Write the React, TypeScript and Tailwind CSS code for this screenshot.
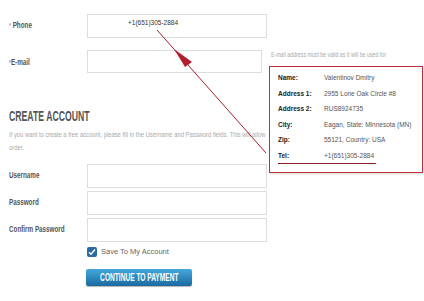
import React from 'react'

const sans = "font-['Liberation_Sans',Arial,sans-serif]"

const details = [
  { label: 'Name:', value: 'Valentinov Dmitry' },
  { label: 'Address 1:', value: '2955 Lone Oak Circle #8' },
  { label: 'Address 2:', value: 'RUS8924735' },
  { label: 'City:', value: 'Eagan, State: Minnesota (MN)' },
  { label: 'Zip:', value: '55121, Country: USA' },
]

// no condensed face installed, so squeeze the regular one
function Narrow({ children, className = '' }: { children: React.ReactNode; className?: string }) {
  return <span className={`inline-block origin-left scale-x-[0.7] whitespace-nowrap ${className}`}>{children}</span>
}

function Field({ label }: { label: string }) {
  return (
    <div className="flex items-center">
      <span className="w-[78px] shrink-0 text-[9px] font-bold text-[#555]">
        <Narrow>{label}</Narrow>
      </span>
      <div className="w-[180px] h-[24px] shrink-0 border border-[#ddd] bg-white" />
    </div>
  )
}

export default function App() {
  return (
    <div className={`relative w-[424px] h-[301px] overflow-hidden bg-white pl-[9px] pt-[14px] ${sans}`}>
      {/* contact fields */}
      <div className="flex items-center">
        <span className="w-[78px] shrink-0 text-[9px] font-bold text-[#555]">
          <Narrow>
            <span className="text-[#d77] text-[7px]">*</span> Phone
          </Narrow>
        </span>
        <div className="w-[180px] h-[24px] shrink-0 border border-[#ddd] pl-[40px] pt-[3px] text-[6.5px] text-[#333]">
          +1(651)305-2884
        </div>
      </div>
      <div className="flex items-start mt-[12px]">
        <span className="w-[78px] shrink-0 mt-[6px] text-[9px] font-bold text-[#555]">
          <Narrow>
            <span className="text-[#d77] text-[7px]">*</span>E-mail
          </Narrow>
        </span>
        <div className="w-[175px] h-[23px] shrink-0 border border-[#ddd]" />
        <span className="ml-[9px] mt-[-1px] shrink-0 text-[7.5px] text-[#aaa]">
          <Narrow className="scale-x-[0.6]">E-mail address must be valid as it will be used for</Narrow>
        </span>
      </div>

      {/* create account */}
      <h2 className="mt-[36px] h-[14px] text-[14px] leading-[14px] font-bold text-[#555]">
        <Narrow className="scale-x-[0.62]">CREATE ACCOUNT</Narrow>
      </h2>
      <div className="mt-[5px] text-[7.5px] leading-[13px] text-[#aaa]">
        {/* the rest of this line sits under the address popup */}
        <div className="w-[257px] overflow-hidden">
          <Narrow className="scale-x-[0.78]">
            If you want to create a free account, please fill in the Username and Password fields. This will allow you to view your
          </Narrow>
        </div>
        <div>
          <Narrow className="scale-x-[0.78]">order.</Narrow>
        </div>
      </div>

      <div className="mt-[10px] flex flex-col gap-[3px]">
        <Field label="Username" />
        <Field label="Password" />
        <Field label="Confirm Password" />
      </div>

      <label className="flex h-[10px] items-center ml-[78px] mt-[5px] gap-[4px] leading-none">
        <span className="w-[10px] h-[10px] rounded-[2px] bg-[#2d6a9f] flex items-center justify-center">
          <svg width="8" height="8" viewBox="0 0 8 8">
            <path d="M1 4.2 L3 6.2 L7 1.5" fill="none" stroke="#fff" strokeWidth="1.4" />
          </svg>
        </span>
        <span className="text-[7.5px] text-[#666]">Save To My Account</span>
      </label>

      <button className="mt-[12px] ml-[77px] flex w-[106px] h-[17px] items-center justify-center rounded-[2px] bg-gradient-to-b from-[#45a8dd] to-[#1b6aa0] text-[11px] leading-none font-bold text-white shadow-[0_1px_1px_rgba(0,0,0,0.3)]">
        <span className="inline-block whitespace-nowrap scale-x-[0.6]">CONTINUE TO PAYMENT</span>
      </button>

      {/* pointer arrow */}
      <svg className="absolute left-0 top-0 pointer-events-none" width="424" height="301">
        <line x1="157" y1="30" x2="266" y2="153" stroke="#a3202c" strokeWidth="1" />
        <polygon points="174,49 192,62 185,67" fill="#b0202c" />
      </svg>

      {/* address popup */}
      <div className="absolute left-[269px] top-[66px] w-[154px] h-[107px] border-[1.5px] border-[#b8333a] bg-white pl-[8px] pt-[3px] text-[6.5px] shadow-[1px_1px_2px_rgba(0,0,0,0.15)]">
        {details.map((d) => (
          <div key={d.label} className="flex h-[15.6px] items-center">
            <span className="w-[46px] font-bold text-[#222]">{d.label}</span>
            <span className="text-[#555]">{d.value}</span>
          </div>
        ))}
        <div className="flex h-[16px] items-center border-b border-[#8b1d25] w-[98px]">
          <span className="w-[46px] font-bold text-[#222]">Tel:</span>
          <span className="text-[#555]">+1(651)305-2884</span>
        </div>
      </div>
    </div>
  )
}
